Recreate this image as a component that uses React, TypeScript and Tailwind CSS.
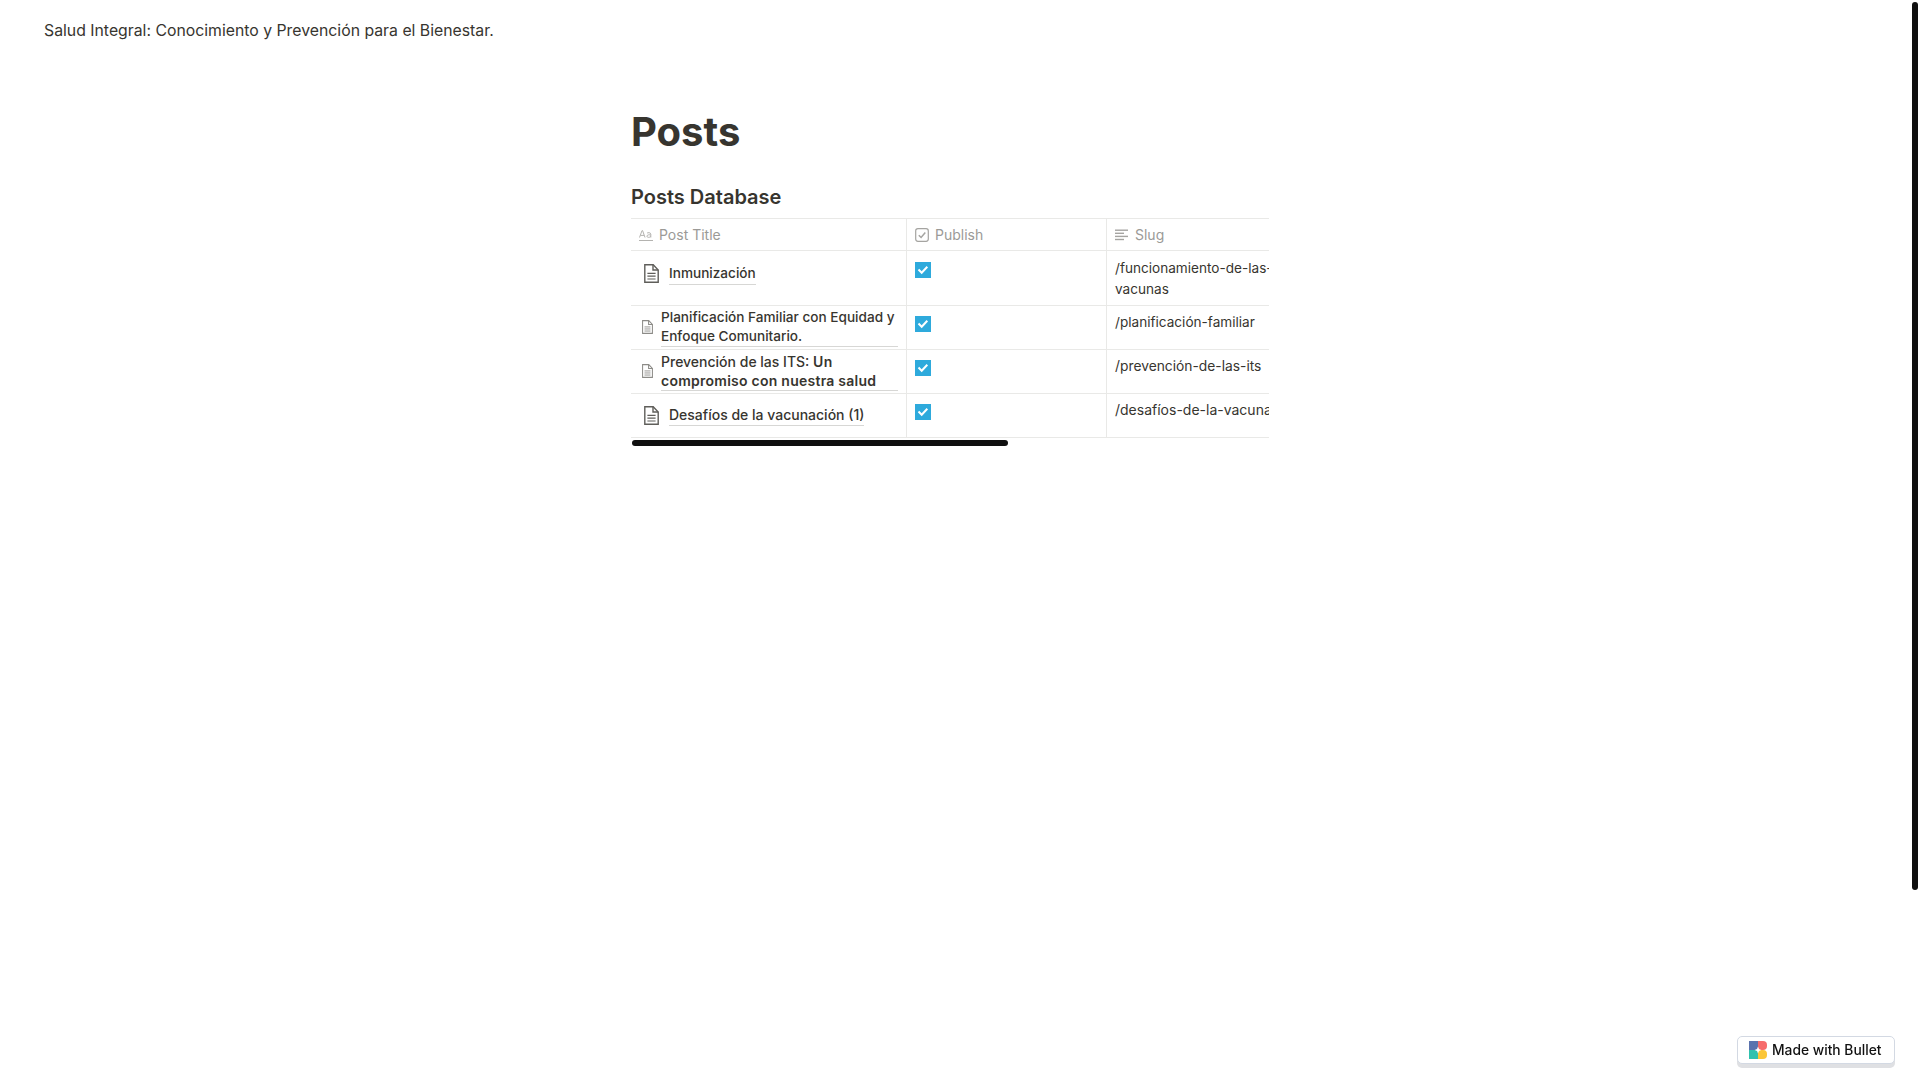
import React from "react";

const pageFont = { fontFamily: "Inter, 'Liberation Sans', sans-serif" };

function PageIcon({ small }: { small?: boolean }) {
  return (
    <svg
      viewBox="0 0 15 19"
      className={small ? "mb-[2px] h-[14px] w-[11px] shrink-0" : "h-[19px] w-[15px] shrink-0"}
      fill="none"
      stroke={small ? "#8c8b87" : "#5f5e5a"}
      strokeWidth="1.4"
    >
      <path d="M.8.8h8.4l5 5.2v12.2H.8z" />
      <path d="M9 .8V6h5.2" />
      <path d="M3.4 9.4h8.2M3.4 12.2h8.2M3.4 15h8.2" strokeWidth="1.2" />
    </svg>
  );
}

function AaIcon() {
  return (
    <svg viewBox="0 0 14 14" className="h-[14px] w-[14px] shrink-0" fill="none" stroke="#b4b3b0" strokeWidth="1">
      <path d="M.5 9.5 3 2.6h.6L6 9.5M1.4 7.4h3.7" />
      <path d="M8 5.2c.5-.7 3.8-1 3.8 1v3.3M11.8 7c-1-.4-3.9-.4-3.9 1.2 0 1.6 3 1.4 3.9.2" />
      <path d="M0 12.5h14" />
    </svg>
  );
}

function CheckIcon() {
  return (
    <svg viewBox="0 0 14 14" className="h-[14px] w-[14px] shrink-0" fill="none" stroke="#a5a4a1" strokeWidth="1.2">
      <rect x=".7" y=".7" width="12.6" height="12.6" rx="2.2" />
      <path d="m3.8 7.2 2.3 2.3 4.2-5" strokeWidth="1.5" />
    </svg>
  );
}

function TextIcon() {
  return (
    <svg viewBox="0 0 14 14" className="h-[14px] w-[14px] shrink-0" fill="#a5a4a1">
      <rect x="0" y="1.5" width="13" height="1.4" />
      <rect x="0" y="4.6" width="9" height="1.4" />
      <rect x="0" y="7.7" width="13" height="1.4" />
      <rect x="0" y="10.8" width="9" height="1.4" />
    </svg>
  );
}

function Checked() {
  return (
    <div className="flex h-4 w-4 items-center justify-center bg-[#2eaadc]">
      <svg viewBox="0 0 14 14" className="h-[14px] w-[14px]" fill="none" stroke="#fff" strokeWidth="2">
        <path d="m2.5 6.5 3.2 3.2 5.6-6" />
      </svg>
    </div>
  );
}

function BulletLogo() {
  return (
    <svg viewBox="0 0 18 18" className="h-[18px] w-[18px] shrink-0">
      <path d="M0 0h9v9H0z" fill="#5b73ae" />
      <path d="M9 0h5a4 4 0 0 1 4 4v1a4 4 0 0 1-4 4H9z" fill="#f66c6c" />
      <path d="M0 9h9v9H0z" fill="#2fc1ae" />
      <path d="M9 9h5a4 4 0 0 1 4 4v1a4 4 0 0 1-4 4H9z" fill="#fbc638" />
      <path d="M9 5.6 10 8l2.4 1-2.4 1-1 2.4L8 10 5.6 9 8 8z" fill="#fff" />
    </svg>
  );
}

const cell = "border-b border-r border-[#e9e9e7] px-2";

function App() {
  return (
    <div className="relative min-h-screen bg-white text-[#37352f]" style={pageFont}>
      <header className="pl-11 pt-[19px] text-[15.8px] leading-6">
        Salud Integral: Conocimiento y Prevención para el Bienestar.
      </header>

      <main className="mx-auto mt-[65px] w-[638px] -translate-x-[10px]">
        <h1 className="text-[40px] font-bold leading-[48px]">Posts</h1>
        <h2 className="mt-[29px] text-xl font-semibold leading-6">Posts Database</h2>

        <div className="mt-[9px] overflow-hidden">
          <div className="grid w-[840px] grid-cols-[276px_200px_364px] border-t border-[#e9e9e7] text-[13.6px] leading-[21px]">
            <div className={`${cell} flex h-[32px] items-center gap-[6px] text-sm text-[#9b9a97]`}>
              <AaIcon />
              Post Title
            </div>
            <div className={`${cell} flex h-[32px] items-center gap-[6px] text-sm text-[#9b9a97]`}>
              <CheckIcon />
              Publish
            </div>
            <div className={`${cell} flex h-[32px] items-center gap-[6px] text-sm text-[#9b9a97]`}>
              <TextIcon />
              Slug
            </div>

            <div className={`${cell} flex h-[55px] items-start gap-[10px] pl-[13px] pt-[11px] font-[450]`}>
              <div className="pt-[2px]">
                <PageIcon />
              </div>
              <span className="mt-[1px] border-b border-[#d7d7d5] leading-[21px]">Inmunización</span>
            </div>
            <div className={`${cell} pt-[11px]`}>
              <Checked />
            </div>
            <div className={`${cell} pt-[7px]`}>
              /funcionamiento-de-las-
              <br />
              vacunas
            </div>

            <div className={`${cell} flex h-[44px] items-center gap-[8px] pl-[11px] font-[450] leading-[19px]`}>
              <PageIcon small />
              <span className="block w-[237px] border-b border-[#d7d7d5]">
                Planificación Familiar con Equidad y Enfoque Comunitario.
              </span>
            </div>
            <div className={`${cell} pt-[10px]`}>
              <Checked />
            </div>
            <div className={`${cell} pt-[6px]`}>/planificación-familiar</div>

            <div className={`${cell} flex h-[44px] items-center gap-[8px] pl-[11px] text-sm font-[450] leading-[19px]`}>
              <PageIcon small />
              <span className="block w-[237px] border-b border-[#d7d7d5]">
                Prevención de las ITS:{" "}
                <span className="font-semibold tracking-[0.25px]">Un compromiso con nuestra salud</span>
              </span>
            </div>
            <div className={`${cell} pt-[10px]`}>
              <Checked />
            </div>
            <div className={`${cell} pt-[6px] text-[13.8px]`}>/prevención-de-las-its</div>

            <div className={`${cell} flex h-[44px] items-start gap-[10px] pl-[13px] pt-[9px] text-sm font-[450]`}>
              <div className="pt-[3px]">
                <PageIcon />
              </div>
              <span className="mt-[1px] border-b border-[#d7d7d5] leading-[21px]">Desafíos de la vacunación (1)</span>
            </div>
            <div className={`${cell} pt-[10px]`}>
              <Checked />
            </div>
            <div className={`${cell} whitespace-nowrap pt-[6px] text-sm`}>/desafíos-de-la-vacunación</div>
          </div>
        </div>
        <div className="ml-px mt-[2px] h-[6px] w-[376px] rounded-full bg-[#0f0f0f]" />
      </main>

      {/* page scrollbar thumb */}
      <div className="fixed right-[2px] top-[2px] h-[888px] w-[6px] rounded-full bg-[#0f0f0f]" />

      <a className="fixed bottom-[16px] right-[25px] flex h-[28px] w-[158px] items-center gap-[5px] rounded-[5px] border border-[#d3d9e3] bg-white pl-[11px] text-[13.8px] font-medium leading-none text-[#111] shadow-[0_4px_0_#dfe0e3]">
        <BulletLogo />
        <span className="pt-[2px]">Made with Bullet</span>
      </a>
    </div>
  );
}

export default App;
